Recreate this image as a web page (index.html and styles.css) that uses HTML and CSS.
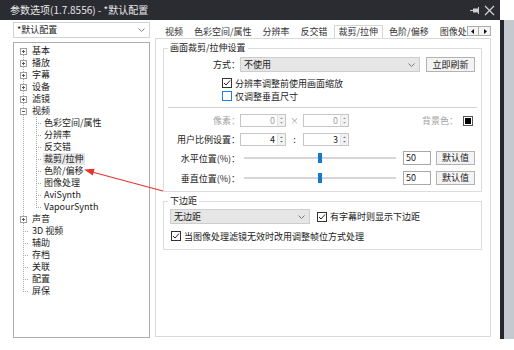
FILE: index.html
```html
<!DOCTYPE html>
<html lang="zh-CN">
<head>
  <meta charset="UTF-8" />
  <title>参数选项</title>
  <link rel="stylesheet" href="styles.css">
</head>
<body>
  <div class="desk">
    <div class="window">
      <div class="titlebar">
        <span class="title">参数选项(1.7.8556) - *默认配置</span>
        <span class="tb-icons">
          <svg width="11" height="9" viewBox="0 0 11 9"><path d="M0 4.5h3" stroke="#cfcfcf"/><rect x="3" y="2.5" width="5" height="4" fill="#cfcfcf"/><path d="M8.5 1v7" stroke="#cfcfcf"/></svg>
          <svg width="11" height="11" viewBox="0 0 11 11"><path d="M1 1l9 9M10 1l-9 9" stroke="#d4d4d4" stroke-width="1.2"/></svg>
        </span>
      </div>

      <div class="body">
        <div class="side">
          <div class="combo">
            <span>*默认配置</span>
            <svg width="7" height="4" viewBox="0 0 7 4"><path d="M0.5 0.5l3 3 3-3" fill="none" stroke="#888"/></svg>
          </div>
          <div class="tree">
            <div class="row"><span class="g1 first"><svg class="exp" width="7" height="7" viewBox="0 0 7 7"><rect x=".5" y=".5" width="6" height="6" fill="#fff" stroke="#a0a0a0"/><path d="M2 3.5h3M3.5 2v3" stroke="#555"/></svg></span><span class="lbl">基本</span></div>
            <div class="row"><span class="g1 v"><svg class="exp" width="7" height="7" viewBox="0 0 7 7"><rect x=".5" y=".5" width="6" height="6" fill="#fff" stroke="#a0a0a0"/><path d="M2 3.5h3M3.5 2v3" stroke="#555"/></svg></span><span class="lbl">播放</span></div>
            <div class="row"><span class="g1 v"><svg class="exp" width="7" height="7" viewBox="0 0 7 7"><rect x=".5" y=".5" width="6" height="6" fill="#fff" stroke="#a0a0a0"/><path d="M2 3.5h3M3.5 2v3" stroke="#555"/></svg></span><span class="lbl">字幕</span></div>
            <div class="row"><span class="g1 v"><svg class="exp" width="7" height="7" viewBox="0 0 7 7"><rect x=".5" y=".5" width="6" height="6" fill="#fff" stroke="#a0a0a0"/><path d="M2 3.5h3M3.5 2v3" stroke="#555"/></svg></span><span class="lbl">设备</span></div>
            <div class="row"><span class="g1 v"><svg class="exp" width="7" height="7" viewBox="0 0 7 7"><rect x=".5" y=".5" width="6" height="6" fill="#fff" stroke="#a0a0a0"/><path d="M2 3.5h3M3.5 2v3" stroke="#555"/></svg></span><span class="lbl">滤镜</span></div>
            <div class="row"><span class="g1 v"><svg class="exp" width="7" height="7" viewBox="0 0 7 7"><rect x=".5" y=".5" width="6" height="6" fill="#fff" stroke="#a0a0a0"/><path d="M2 3.5h3" stroke="#555"/></svg></span><span class="lbl">视频</span></div>
            <div class="row"><span class="g1 v"></span><span class="g2 t"></span><span class="lbl">色彩空间/属性</span></div>
            <div class="row"><span class="g1 v"></span><span class="g2 t"></span><span class="lbl">分辨率</span></div>
            <div class="row"><span class="g1 v"></span><span class="g2 t"></span><span class="lbl">反交错</span></div>
            <div class="row"><span class="g1 v"></span><span class="g2 t"></span><span class="lbl sel">裁剪/拉伸</span></div>
            <div class="row"><span class="g1 v"></span><span class="g2 t"></span><span class="lbl">色阶/偏移</span></div>
            <div class="row"><span class="g1 v"></span><span class="g2 t"></span><span class="lbl">图像处理</span></div>
            <div class="row"><span class="g1 v"></span><span class="g2 t"></span><span class="lbl">AviSynth</span></div>
            <div class="row"><span class="g1 v"></span><span class="g2 t last"></span><span class="lbl">VapourSynth</span></div>
            <div class="row"><span class="g1 v"><svg class="exp" width="7" height="7" viewBox="0 0 7 7"><rect x=".5" y=".5" width="6" height="6" fill="#fff" stroke="#a0a0a0"/><path d="M2 3.5h3M3.5 2v3" stroke="#555"/></svg></span><span class="lbl">声音</span></div>
            <div class="row"><span class="g1 t"></span><span class="lbl">3D 视频</span></div>
            <div class="row"><span class="g1 t"></span><span class="lbl">辅助</span></div>
            <div class="row"><span class="g1 t"></span><span class="lbl">存档</span></div>
            <div class="row"><span class="g1 t"></span><span class="lbl">关联</span></div>
            <div class="row"><span class="g1 t"></span><span class="lbl">配置</span></div>
            <div class="row"><span class="g1 t last"></span><span class="lbl">屏保</span></div>
          </div>
        </div>

        <div class="main">
          <div class="tabs">
            <div class="tab-list">
              <span class="tab">视频</span>
              <span class="tab">色彩空间/属性</span>
              <span class="tab">分辨率</span>
              <span class="tab">反交错</span>
              <span class="tab on">裁剪/拉伸</span>
              <span class="tab">色阶/偏移</span>
              <span class="tab">图像处理</span>
            </div>
            <div class="tab-scroll">
              <span class="tsb"><svg width="4" height="5" viewBox="0 0 4 5"><path d="M3 0v5L0 2.5z" fill="#111"/></svg></span>
              <span class="tsb"><svg width="4" height="5" viewBox="0 0 4 5"><path d="M1 0v5l3-2.5z" fill="#111"/></svg></span>
            </div>
          </div>

          <div class="page">
            <fieldset class="group g-crop">
              <legend>画面裁剪/拉伸设置</legend>
              <div class="f-row r-mode">
                <span class="lab">方式：</span>
                <div class="select wide">
                  <span>不使用</span>
                  <svg width="7" height="4" viewBox="0 0 7 4"><path d="M0.5 0.5l3 3 3-3" fill="none" stroke="#777"/></svg>
                </div>
                <span class="btn b-refresh">立即刷新</span>
              </div>
              <div class="f-row r-check c1">
                <svg class="chk" width="10" height="10" viewBox="0 0 10 10"><rect x=".5" y=".5" width="9" height="9" fill="#fff" stroke="#333"/><path d="M2 5l2 2 4-4.5" fill="none" stroke="#222"/></svg>
                <span>分辨率调整前使用画面缩放</span>
              </div>
              <div class="f-row r-check c2">
                <svg class="chk" width="10" height="10" viewBox="0 0 10 10"><rect x=".5" y=".5" width="9" height="9" fill="#fff" stroke="#1e7fd8"/></svg>
                <span>仅调整垂直尺寸</span>
              </div>
              <div class="sep"></div>
              <div class="f-row r-spin r-pixel">
                <span class="lab off">像素：</span>
                <div class="spin off"><span class="val">0</span><span class="arr"><svg width="7" height="11" viewBox="0 0 7 11"><path d="M2 4h3L3.5 2.5zM2 7h3L3.5 8.5z" fill="#999"/></svg></span></div>
                <span class="mid off">×</span>
                <div class="spin off"><span class="val">0</span><span class="arr"><svg width="7" height="11" viewBox="0 0 7 11"><path d="M2 4h3L3.5 2.5zM2 7h3L3.5 8.5z" fill="#999"/></svg></span></div>
                <span class="grow"></span>
                <span class="off">背景色：</span>
                <span class="swatch"></span>
              </div>
              <div class="f-row r-spin r-ratio">
                <span class="lab">用户比例设置：</span>
                <div class="spin"><span class="val">4</span><span class="arr"><svg width="7" height="11" viewBox="0 0 7 11"><path d="M2 4h3L3.5 2.5zM2 7h3L3.5 8.5z" fill="#777"/></svg></span></div>
                <span class="mid">:</span>
                <div class="spin"><span class="val">3</span><span class="arr"><svg width="7" height="11" viewBox="0 0 7 11"><path d="M2 4h3L3.5 2.5zM2 7h3L3.5 8.5z" fill="#777"/></svg></span></div>
              </div>
              <div class="f-row r-slide s1">
                <span class="lab">水平位置(%)：</span>
                <div class="track"><span class="thumb"></span></div>
                <span class="edit">50</span>
                <span class="btn b-def">默认值</span>
              </div>
              <div class="f-row r-slide s2">
                <span class="lab">垂直位置(%)：</span>
                <div class="track"><span class="thumb"></span></div>
                <span class="edit">50</span>
                <span class="btn b-def">默认值</span>
              </div>
            </fieldset>

            <fieldset class="group g-margin">
              <legend>下边距</legend>
              <div class="f-row m1">
                <div class="select narrow">
                  <span>无边距</span>
                  <svg width="7" height="4" viewBox="0 0 7 4"><path d="M0.5 0.5l3 3 3-3" fill="none" stroke="#777"/></svg>
                </div>
                <svg class="chk" width="10" height="10" viewBox="0 0 10 10"><rect x=".5" y=".5" width="9" height="9" fill="#fff" stroke="#333"/><path d="M2 5l2 2 4-4.5" fill="none" stroke="#222"/></svg>
                <span>有字幕时则显示下边距</span>
              </div>
              <div class="f-row m2">
                <svg class="chk" width="10" height="10" viewBox="0 0 10 10"><rect x=".5" y=".5" width="9" height="9" fill="#fff" stroke="#333"/><path d="M2 5l2 2 4-4.5" fill="none" stroke="#222"/></svg>
                <span>当图像处理滤镜无效时改用调整帧位方式处理</span>
              </div>
            </fieldset>
          </div>
        </div>
      </div>
    </div>
    <div class="edge"><div class="edge-dark"></div><div class="edge-bg"></div></div>

    <svg class="arrow" width="514" height="350" viewBox="0 0 514 350">
      <path d="M163 191L92 172" stroke="#e8342e" stroke-width="1.2"/>
      <path d="M84 169.5L92.8 175.5L94.6 168.7z" fill="#e8342e"/>
    </svg>
  </div>
</body>
</html>
```

FILE: styles.css
```css
* {
  box-sizing: border-box;
}

body {
  margin: 0;
  background: #fff;
  font-family: "Noto Sans CJK SC", "Noto Sans", sans-serif;
  font-size: 9px;
  color: #1a1a1a;
}

.desk {
  display: flex;
  height: 350px;
  position: relative;
}

.window {
  width: 500px;
  height: 340px;
  display: flex;
  flex-direction: column;
  background: #fff;
}

.titlebar {
  height: 20px;
  flex: none;
  background: #2b2b32;
  color: #e8e8e8;
  display: flex;
  align-items: center;
  justify-content: space-between;
  padding: 0 5px 0 10px;
}

.title {
  font-size: 10px;
  line-height: 20px;
}

.tb-icons {
  display: flex;
  align-items: center;
  gap: 3px;
}

.edge {
  width: 14px;
  height: 339px;
  display: flex;
  padding-top: 20px;
}

.edge-dark {
  width: 4px;
  background: #26262c;
}

.edge-bg {
  flex: 1;
  background: #c4c9cf;
}

.arrow {
  position: absolute;
  top: 0;
  left: 0;
  pointer-events: none;
}

/* layout */

.body {
  flex: 1;
  display: flex;
  gap: 5px;
  padding: 2px 0 0 13px;
}

.side {
  width: 137px;
  display: flex;
  flex-direction: column;
  gap: 4px;
}

.combo {
  height: 16px;
  border: 1px solid #d2d2d2;
  display: flex;
  align-items: center;
  justify-content: space-between;
  padding: 0 4px 0 3px;
  line-height: 14px;
}

/* tree */

.tree {
  height: 296px;
  border: 1px solid #acacac;
  padding-top: 2px;
}

.row {
  display: flex;
  align-items: center;
  height: 12px;
  line-height: 12px;
  white-space: nowrap;
}

.g1,
.g2 {
  flex: none;
  height: 12px;
  display: flex;
  align-items: center;
}

.g1 {
  width: 17px;
  background: repeating-linear-gradient(#a8a8a8 0 1px, transparent 1px 2px) 9px 0 / 1px 100% no-repeat;
}

.g1.first {
  background-position: 9px 6px;
  background-size: 1px 6px;
}

.g1.t {
  background:
    repeating-linear-gradient(90deg, #a8a8a8 0 1px, transparent 1px 2px) 9px 6px / 6px 1px no-repeat,
    repeating-linear-gradient(#a8a8a8 0 1px, transparent 1px 2px) 9px 0 / 1px 100% no-repeat;
}

.g1.t.last {
  background:
    repeating-linear-gradient(90deg, #a8a8a8 0 1px, transparent 1px 2px) 9px 6px / 6px 1px no-repeat,
    repeating-linear-gradient(#a8a8a8 0 1px, transparent 1px 2px) 9px 0 / 1px 7px no-repeat;
}

.g2 {
  width: 12px;
  background:
    repeating-linear-gradient(90deg, #a8a8a8 0 1px, transparent 1px 2px) 5px 6px / 6px 1px no-repeat,
    repeating-linear-gradient(#a8a8a8 0 1px, transparent 1px 2px) 5px 0 / 1px 100% no-repeat;
}

.g2.last {
  background:
    repeating-linear-gradient(90deg, #a8a8a8 0 1px, transparent 1px 2px) 5px 6px / 6px 1px no-repeat,
    repeating-linear-gradient(#a8a8a8 0 1px, transparent 1px 2px) 5px 0 / 1px 7px no-repeat;
}

.exp {
  margin-left: 6px;
}

.lbl {
  padding: 0 1px;
}

.lbl.sel {
  background: #e6e6e6;
}

/* tabs */

.main {
  width: 336px;
  display: flex;
  flex-direction: column;
}

.tabs {
  height: 16px;
  display: flex;
  align-items: flex-end;
}

.tab-list {
  width: 312px;
  height: 16px;
  display: flex;
  align-items: flex-end;
  gap: 1px;
  padding-left: 5px;
  overflow: hidden;
}

.tab {
  flex: none;
  padding: 0 5px;
  height: 13px;
  line-height: 13px;
  color: #333;
  white-space: nowrap;
}

.tab.on {
  border: 1px solid #d6d6d6;
  border-bottom: none;
  padding: 0 4px;
  line-height: 12px;
}

.tab-scroll {
  display: flex;
  margin-bottom: 2px;
}

.tsb {
  width: 12px;
  height: 10px;
  border: 1px solid #adadad;
  background: #f4f4f4;
  display: flex;
  align-items: center;
  justify-content: center;
}

.tsb + .tsb {
  border-left: none;
}

/* page */

.page {
  height: 299px;
  border: 1px solid #dadada;
  padding: 3px 8px 0 7px;
}

.group {
  margin: 0;
  padding: 0 0 6px;
  border: 1px solid #dcdcdc;
  min-width: 0;
}

.group legend {
  margin-left: 4px;
  padding: 0 2px;
  height: 12px;
  line-height: 12px;
}

.g-margin {
  margin-top: 3px;
  padding-bottom: 7px;
}

.f-row {
  display: flex;
  align-items: center;
  white-space: nowrap;
}

.lab {
  width: 76px;
  flex: none;
  text-align: right;
}

.off {
  color: #a3a3a3;
}

.r-mode {
  margin-top: 3px;
  height: 15px;
}

.select {
  height: 15px;
  border: 1px solid #cdcdcd;
  background: #e6e6e6;
  display: flex;
  align-items: center;
  justify-content: space-between;
  padding: 0 4px 0 3px;
}

.select.wide {
  width: 180px;
}

.select.narrow {
  width: 140px;
  margin-left: 6px;
}

.btn {
  height: 15px;
  border: 1px solid #b3b3b3;
  background: #f3f3f3;
  text-align: center;
  line-height: 13px;
}

.b-refresh {
  width: 49px;
  margin-left: 6px;
}

.r-check {
  height: 12px;
  padding-left: 58px;
}

.c1 {
  margin-top: 5px;
}

.c2 {
  margin-top: 1px;
}

.chk {
  flex: none;
  margin-right: 3px;
}

.sep {
  height: 1px;
  background: #d4d4d4;
  margin: 5px 4px 0;
}

.r-spin {
  height: 13px;
  margin-top: 6px;
}

.spin {
  width: 46px;
  height: 13px;
  border: 1px solid #c6c6c6;
  display: flex;
}

.val {
  flex: 1;
  text-align: right;
  padding-right: 2px;
  line-height: 11px;
}

.arr {
  width: 8px;
  display: flex;
  align-items: center;
  justify-content: center;
  background: #f2f2f2;
  border-left: 1px solid #e2e2e2;
}

.mid {
  width: 17px;
  text-align: center;
}

.grow {
  flex: 1;
}

.swatch {
  width: 10px;
  height: 10px;
  border: 1px solid #555;
  background: #000;
  margin: 0 8px 0 5px;
  box-shadow: inset 0 0 0 1px #fff;
}

.r-slide {
  height: 14px;
}

.s1 {
  margin-top: 5px;
}

.s2 {
  margin-top: 6px;
}

.track {
  width: 152px;
  height: 10px;
  margin-left: 4px;
  display: flex;
  align-items: center;
  background: linear-gradient(#d6d6d6, #d6d6d6) 0 4px / 100% 2px no-repeat;
}

.thumb {
  width: 4px;
  height: 10px;
  margin-left: 74px;
  background: #1677d2;
}

.edit {
  width: 28px;
  height: 14px;
  margin-left: 7px;
  border: 1px solid #a8a8a8;
  padding-left: 2px;
  line-height: 12px;
}

.b-def {
  width: 39px;
  height: 14px;
  margin-left: 5px;
  line-height: 12px;
}

.m1 {
  margin-top: 2px;
  height: 15px;
}

.m1 .chk {
  margin-left: 7px;
}

.m2 {
  margin-top: 6px;
  height: 12px;
  padding-left: 7px;
}
```
